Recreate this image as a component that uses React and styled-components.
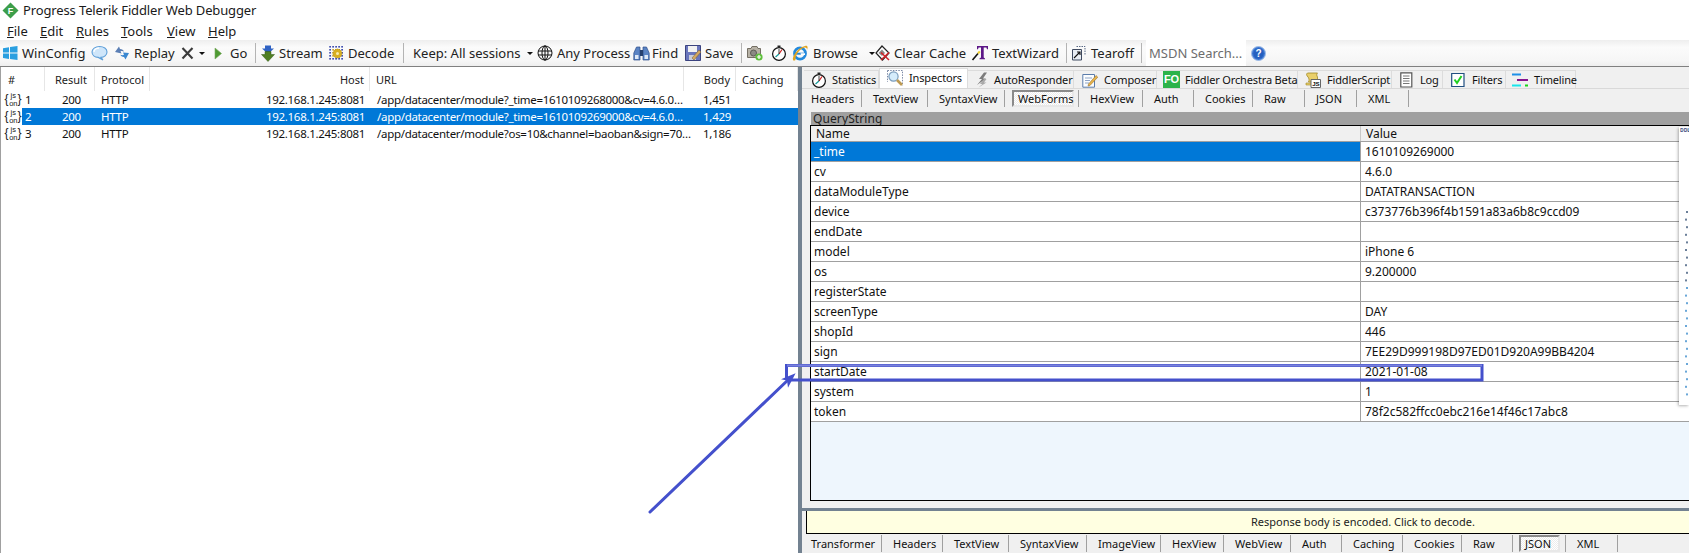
import React from "react";
import styled, { createGlobalStyle } from "styled-components";

const Global = createGlobalStyle`
  html, body { margin: 0; padding: 0; background: #fff; }
  body { font-family: "Noto Sans", "Open Sans", sans-serif; color: #111; }
`;

const Page = styled.div`
  position: relative; width: 1689px; height: 553px; overflow: hidden;
  display: flex; flex-direction: column; background: #fff;
`;
const TitleBar = styled.div`
  height: 20px; display: flex; align-items: center; gap: 4px; padding-left: 2px; font-size: 13px; color: #1a1a1a;
`;
const TitleText = styled.span`letter-spacing: -0.13px;`;
const MenuBar = styled.div`height: 19px; padding-top: 1px; display: flex; align-items: center; padding-left: 7px; font-size: 13px;`;
const MenuItem = styled.span`
  width: ${p => p.$w}px; flex-shrink: 0; color: #1a1a1a;
  &::first-letter { text-decoration: underline; }
`;
const Toolbar = styled.div`
  height: 26px; display: flex; align-items: center; padding-left: 2px; font-size: 13px; color: #222;
  background: linear-gradient(#eeeeee, #fbfbfb 28%, #f6f6f6 80%, #eeeeee);
`;
const Tool = styled.div`
  width: ${p => p.$w}px; padding-left: ${p => p.$pl || 0}px; box-sizing: border-box; flex-shrink: 0;
  display: flex; align-items: center; gap: ${p => p.$gap ?? 4}px; white-space: nowrap;
`;
const Caret = styled.span`
  width: 0; height: 0; border-left: 3px solid transparent; border-right: 3px solid transparent;
  border-top: 3px solid #111; margin-left: ${p => p.$ml || 0}px; flex-shrink: 0;
`;
const ToolSep = styled.div`
  width: ${p => p.$w}px; flex-shrink: 0; display: flex; justify-content: center;
  &::before { content: ""; width: 1px; height: 20px; background: #b4b4b4; }
`;
const Search = styled.div`
  width: 100px; height: 26px; background: #fff; color: #6d6d6d; font-size: 13px; flex-shrink: 0;
  display: flex; align-items: center; padding-left: 3px; box-sizing: border-box; margin-right: 5px; white-space: nowrap;
`;
const Main = styled.div`flex: 1; min-height: 0; display: flex; border-top: 1px solid #808080;`;
const Sessions = styled.div`width: 797px; flex-shrink: 0; border-left: 1px solid #a0a0a0; background: #fff; font-size: 11.5px; letter-spacing: -0.3px;`;
const grid = "44px 50px 55px 220px 314px 52px 62px";
const HeadRow = styled.div`
  display: grid; grid-template-columns: ${grid}; height: 24px; color: #222;
`;
const HeadCell = styled.div`
  display: flex; align-items: center; justify-content: ${p => p.$right ? "flex-end" : "flex-start"};
  padding: 0 ${p => p.$right ? 5 : 0}px 0 ${p => p.$pl ?? 6}px; border-right: 1px solid #e6e6e6; font-size: 11px; letter-spacing: 0;
`;
const Row = styled.div`
  display: grid; grid-template-columns: ${grid}; height: 17px; line-height: 17px; white-space: nowrap;
  color: ${p => p.$sel ? "#fff" : "#111"};
`;
const Cell = styled.div`
  background: ${p => p.$sel ? "#0078d7" : "transparent"};
  text-align: ${p => p.$align || "left"}; padding: 0 ${p => p.$pr ?? 0}px 0 ${p => p.$pl ?? 0}px;
`;
const NumCell = styled.div`display: flex; align-items: center; padding-left: 4px;`;
const Num = styled.span`
  flex: 1; align-self: stretch; padding-left: 3px; margin-left: 1px;
  background: ${p => p.$sel ? "#0078d7" : "transparent"};
`;
const Splitter = styled.div`width: 4px; flex-shrink: 0; background: #738291;`;
const Right = styled.div`
  flex: 1; min-width: 0; display: flex; flex-direction: column; background: #f0f0f0; font-size: 11px;
`;
const TabStrip = styled.div`
  height: 20px; margin-top: 1px; display: flex; align-items: flex-end; padding-left: 2px;
  border-bottom: 1px solid #d9d9d9;
`;
const Tab = styled.div`
  width: ${p => p.$w}px; box-sizing: border-box; flex-shrink: 0; display: flex; align-items: center;
  height: ${p => p.$on ? 20 : 18}px; gap: ${p => p.$gap}px; padding-left: ${p => p.$pl}px; white-space: nowrap;
  background: ${p => p.$on ? "#fff" : "#f0f0f0"}; border: 1px solid #dcdcdc; border-bottom: 0; border-left-width: ${p => p.$on ? 1 : 0}px;
  color: #111; font-size: 11px; letter-spacing: -0.15px; padding-bottom: ${p => p.$on ? 2 : 0}px;
`;
const SubTabs = styled.div`
  height: 19px; display: flex; padding-left: ${p => p.$pl || 0}px; flex-shrink: 0; align-items: stretch;
`;
const SubTab = styled.div`
  width: ${p => p.$w}px; box-sizing: border-box; flex-shrink: 0; display: flex; align-items: center;
  padding-left: ${p => p.$pl}px; white-space: nowrap; color: #111; font-size: 11px;
  border-right: 1px solid #a0a0a0; margin: 1px 0;
`;
const SubTabBox = styled.span`
  height: 17px; box-sizing: border-box; display: flex; align-items: center; padding: 0 4px; margin-left: -5px;
  width: ${p => p.$w}px; border: 2px solid; border-color: #8a8a8a #e8e8e8 #e8e8e8 #8a8a8a;
  background: repeating-conic-gradient(#ffffff 0 25%, #ececec 0 50%) 0 0 / 2px 2px;
`;
const Inspector = styled.div`flex: 1; min-height: 0; margin: 4px 0 0 8px; display: flex; flex-direction: column;`;
const Band = styled.div`
  height: 13px; line-height: 13px; background: #a0a0a0; padding-left: 2px; margin-left: 1px; color: #222; font-size: 12px; letter-spacing: 0.1px;
`;
const GridBox = styled.div`
  flex: 1; min-height: 0; border: 1px solid #000; border-right: 0; background: #eef6fd;
  display: flex; flex-direction: column;
`;
const GridHead = styled.div`
  height: 16px; flex-shrink: 0; display: grid; grid-template-columns: 550px 1fr; background: #f0f0f0; box-sizing: border-box;
  border-bottom: 1px solid #a0a0a0; line-height: 15px; font-size: 12px;
`;
const GridHeadCell = styled.div`padding-left: 5px; border-right: 1px solid #c8c8c8;`;
const GridRow = styled.div`
  height: 20px; flex-shrink: 0; box-sizing: border-box; display: grid; grid-template-columns: 550px 1fr;
  border-bottom: 1px solid #a0a0a0; background: #fff; line-height: 19px; font-size: 12px;
`;
const NameCell = styled.div`
  padding-left: 3px; border-right: 1px solid #a0a0a0; color: ${p => p.$sel ? "#fff" : "#111"};
  background: ${p => p.$sel ? "#0078d7" : "#fff"};
`;
const ValueCell = styled.div`padding-left: 4px;`;
const Gap = styled.div`height: 7px; flex-shrink: 0;`;
const HSplit = styled.div`height: 3px; flex-shrink: 0; background: #738291;`;
const Notice = styled.div`
  height: 23px; flex-shrink: 0; box-sizing: border-box; margin-left: 4px; background: #ffffe1;
  border: 1px solid #000; border-right: 0; border-top: 0; padding-left: 444px; line-height: 22px; font-size: 11px; color: #222;
`;
const Overlay = styled.div`
  position: absolute; left: 1679px; top: 127px; width: 10px; height: 278px; background: #fff;
  box-shadow: -1px 1px 3px rgba(0,0,0,.3);
  font-size: 5px; line-height: 7px; font-weight: 700; color: #3d4f80; overflow: hidden; padding-left: 1px; box-sizing: border-box;
`;
const OverlayMarks = styled.svg`position: absolute; left: 0; top: 83px;`;
const Annotation = styled.svg`position: absolute; left: 0; top: 0; pointer-events: none;`;

const S = ({ children, w = 16, h = 16, vb }) => (
  <svg width={w} height={h} viewBox={vb || `0 0 ${w} ${h}`} style={{ flexShrink: 0, display: "block", overflow: "visible" }}>{children}</svg>
);

const IconFiddler = () => (
  <S w={17} h={17}>
    <path d="M8.5 0.5 L16.5 8.5 L8.5 16.5 L0.5 8.5Z" fill="#3c9e4a" />
    <text x="8.5" y="12" textAnchor="middle" fontSize="9" fontWeight="700" fill="#fff" fontFamily="Liberation Sans">F</text>
  </S>
);
const IconWin = () => (
  <S>
    <path d="M1 3.2 L7 2.2V7.6H1ZM8 2L15.5 1V7.6H8ZM1 8.6H7V14L1 13ZM8 8.6H15.5V15L8 14Z" fill="#2a9fe0" />
  </S>
);
const IconChat = () => (
  <S w={17}>
    <path d="M8.5 1.5C12.8 1.5 16 3.8 16 7S13 12.3 10 12.4L12 15 7.3 12.4C3.6 12.2 1 10 1 7S4.2 1.5 8.5 1.5Z" fill="#cfe6fa" stroke="#5e9fd8" strokeWidth="1.1" />
    <path d="M3 7C3 4.5 5.5 3.2 8 3" stroke="#fff" strokeWidth="1.3" fill="none" />
  </S>
);
const IconReplay = () => (
  <S>
    <path d="M1 7 L5 1.5 L6 4 C8 4 9.5 5 10 6.5 C8.5 5.8 7.5 5.8 6.5 6.2 L7.5 8.5Z" fill="#5b7fb5" />
    <path d="M15 8 L11.5 14.5 L10 12 C8 12 6.8 11 6.3 9.8 C8 10.3 9 10.2 10 9.8 L9 7.5Z" fill="#3a87d0" />
  </S>
);
const IconX = () => (
  <S w={13} h={14}>
    <path d="M1.5 2 L11.5 12.5M11.5 2 L1.5 12.5" stroke="#3b3b3b" strokeWidth="2.1" />
  </S>
);
const IconGo = () => (
  <S w={8} h={13}>
    <path d="M1 1 L7.5 6.5 L1 12Z" fill="#4e9a32" stroke="#7aa860" strokeWidth=".6" />
  </S>
);
const IconStream = () => (
  <S w={14} h={17}>
    <path d="M4 0.5H10V3.5H13L7 9 1 3.5H4Z" fill="#2f62c4" />
    <path d="M4 6.5H10V9.5H13.5L7 16.5 0.5 9.5H4Z" fill="#4f7f22" stroke="#33591a" strokeWidth=".5" />
  </S>
);
const IconDecode = () => (
  <S>
    {[1, 4, 7, 10, 13].flatMap(x => [1, 4, 7, 10, 13].map(y => (
      <rect key={x + "-" + y} x={x - 0.7} y={y} width="1.6" height="1.6" fill={(x === 1 || x === 13 || y === 1 || y === 13) ? "#2f3fa8" : "#c9a227"} />
    )))}
    <circle cx="8.5" cy="8.5" r="4.5" fill="#d9b021" stroke="#9a7a12" strokeWidth=".6" strokeDasharray="1.2 .8" />
    <circle cx="8.5" cy="8.5" r="1.5" fill="#f7ecb0" />
  </S>
);
const IconGlobe = () => (
  <S>
    <g fill="none" stroke="#111" strokeWidth="1">
      <circle cx="8" cy="8" r="7" />
      <ellipse cx="8" cy="8" rx="3" ry="7" />
      <path d="M1 6H15M1 10H15M8 0.5V15.5" />
    </g>
  </S>
);
const IconFind = () => (
  <S w={17}>
    <path d="M3.5 2H7V15H0.8V8ZM13.5 2H10V15H16.2V8Z" fill="#5b84c4" stroke="#2f4f8a" strokeWidth=".7" />
    <path d="M7 5H10V11H7Z" fill="#26406f" />
    <path d="M2 10H5.5V14H2ZM11.5 10H15V14H11.5Z" fill="#dfe9f7" />
  </S>
);
const IconSave = () => (
  <S>
    <path d="M0.5 0.5H15.5V15.5H0.5Z" fill="#6a76bd" stroke="#3b437f" />
    <path d="M3 1H12V7H3Z" fill="#f2f2f2" />
    <path d="M4 10H11V15H4Z" fill="#c9ccd9" />
    <path d="M7 13 L14 5 L16 7 L9 15Z" fill="#d4a760" stroke="#6e5a34" strokeWidth=".5" />
  </S>
);
const IconCamera = () => (
  <S>
    <path d="M0.5 3.5H4L5 1.5H10L11 3.5H13.5V12.5H0.5Z" fill="#b7b2a6" stroke="#757065" />
    <circle cx="6.5" cy="8" r="3" fill="#8b8a84" stroke="#5c5b55" />
    <circle cx="12" cy="12" r="3.6" fill="#5fc03d" />
    <path d="M12 10V14M10 12H14" stroke="#fff" strokeWidth="1.2" />
  </S>
);
const IconTimer = () => (
  <S>
    <path d="M6.5 .5H9.5V2H6.5Z" fill="#222" />
    <circle cx="8" cy="9" r="6.4" fill="#fff" stroke="#111" strokeWidth="1.2" />
    <path d="M8 9L11 4.5" stroke="#d02020" strokeWidth="1.2" />
    <path d="M8 9L4.5 12" stroke="#159a9a" strokeWidth="1.2" />
    <path d="M8 9V4" stroke="#111" strokeWidth=".8" />
  </S>
);
const IconIE = () => (
  <S>
    <circle cx="8" cy="8.5" r="5.6" fill="none" stroke="#2389dc" strokeWidth="2.6" />
    <path d="M3 8.7H13" stroke="#2389dc" strokeWidth="2" />
    <path d="M8.5 8.2H13V10H9Z" fill="#fff" />
    <path d="M1 15 C0 12 5 3 13 1 C16 0 16 3 15 5 C15 3 14 2.3 12.5 2.6 C7 4 3 11 3.5 15 C2.7 15.6 1.4 15.8 1 15Z" fill="#e2a41f" />
  </S>
);
const IconClear = () => (
  <S w={15}>
    <path d="M7 1 L14 8 L7.5 15 L1 8Z" fill="#fff" stroke="#222" strokeWidth="1.2" />
    <path d="M3.5 8 L7 4.5 L10 8 L7 11Z" fill="#8a8a8a" />
    <path d="M6 7.5 L14 15M14 7.5 L6 15" stroke="#d1242a" strokeWidth="1.6" />
  </S>
);
const IconWizard = () => (
  <S>
    <path d="M5 1H16V4.2H15L14.4 2.6H11.7V12.5L13 13.4V14.2H7.5V13.4L9 12.5V2.6H6.6L6 4.2H5Z" fill="#5c1787" />
    <path d="M0.5 15 L6 8.5" stroke="#111" strokeWidth="1.6" />
    <path d="M6 8.5 L7.8 6.4" stroke="#f0cf2a" strokeWidth="2" />
  </S>
);
const IconTearoff = () => (
  <S w={14}>
    <path d="M4.5 1.5H13V9.5" fill="none" stroke="#5a6a86" strokeDasharray="1.5 1" />
    <path d="M.5 4.5H9.5V15H.5Z" fill="#e8edf4" stroke="#3f4a60" />
    <path d="M2 13 L8 7M5 7H8V10" stroke="#111" strokeWidth="1.1" fill="none" />
  </S>
);
const IconHelp = () => (
  <S w={15} h={15}>
    <circle cx="7.5" cy="7.5" r="7" fill="#3e78d2" stroke="#9fbde8" />
    <circle cx="7.5" cy="7.5" r="5.2" fill="#2560c0" />
    <text x="7.5" y="11.2" textAnchor="middle" fontSize="10" fontWeight="700" fill="#fff" fontFamily="Liberation Sans">?</text>
  </S>
);
const IconInspect = () => (
  <S>
    <path d="M.5 .5H15.5V15.5" fill="none" stroke="#7c8aa6" strokeDasharray="1.5 1.2" />
    <path d="M.5 .5V12" fill="none" stroke="#7c8aa6" strokeDasharray="1.5 1.2" />
    <circle cx="6.5" cy="6.5" r="4.6" fill="#d5ecfb" stroke="#7a9cbc" strokeWidth="1.2" />
    <path d="M10 10 L15 15" stroke="#bd9a52" strokeWidth="2.6" />
  </S>
);
const IconBolt = () => (
  <S w={14}>
    <path d="M9 .5 L4 7H7L2 13 L11 6.5H8L12 .5Z" fill="#7c7c7c" />
    <path d="M9 7 L5 12H7.5L3.5 15.5 L11.5 10.5H9L11.5 7Z" fill="#a9a9a9" />
  </S>
);
const IconComposer = () => (
  <S>
    <path d="M.8 2.5H12.5V15.2H.8Z" fill="#fbfdff" stroke="#5a7cab" />
    <path d="M3 6H10M3 8.5H8M3 11H7" stroke="#8fa5c6" />
    <path d="M6.5 12 L14 3.5 L15.8 5.2 L8 13.5 L6 14Z" fill="#e7b34a" stroke="#8a6524" strokeWidth=".5" />
  </S>
);
const FO = styled.span`
  width: 17px; height: 17px; background: #2cb34a; color: #fff; font-weight: 700; font-size: 11px; line-height: 17px;
  text-align: center; flex-shrink: 0; font-family: "Liberation Sans", sans-serif;
`;
const IconScript = () => (
  <S>
    <path d="M2.5 1H12.5C11.5 2 11.5 3.5 12.5 5V10H3.5C4.5 8 4 6 3 5 C1.5 3.5 1 2 2.5 1Z" fill="#e9cf6b" stroke="#a08826" strokeWidth=".8" />
    <path d="M1 11H9V13H1Z" fill="#e9cf6b" stroke="#a08826" strokeWidth=".6" />
    <path d="M6 7.5H15.5V15.5H6Z" fill="#fff" stroke="#666" />
    <text x="10.8" y="14" textAnchor="middle" fontSize="6.2" fontWeight="700" fill="#111" fontFamily="Liberation Sans">JS</text>
  </S>
);
const IconLog = () => (
  <S w={13}>
    <path d="M.8 .8H11.8V15H.8Z" fill="#fff" stroke="#555" strokeWidth="1.2" />
    <path d="M3 4H9.5M3 6.5H9.5M3 9H9.5M3 11.5H9.5" stroke="#777" />
  </S>
);
const IconFilter = () => (
  <S w={14}>
    <path d="M.7 1.5H13V14.5H.7Z" fill="#fff" stroke="#214f80" strokeWidth="1.2" />
    <path d="M3.5 7.5 L6 11 L10.5 4" fill="none" stroke="#22d022" strokeWidth="2" />
  </S>
);
const IconTimeline = () => (
  <S>
    <path d="M0 2.5H9" stroke="#1e90e8" strokeWidth="2" />
    <path d="M5 8H16" stroke="#86148f" strokeWidth="2" />
    <path d="M0 13.5H9" stroke="#19e6ec" strokeWidth="2" />
    <path d="M13 13.5H16" stroke="#19d619" strokeWidth="2" />
  </S>
);
const IconJson = () => (
  <S w={16} h={17}>
    <g fill="#222" fontFamily="Liberation Sans" letterSpacing="0">
      <text x="-0.5" y="12" fontSize="12">{"{"}</text>
      <text x="12.5" y="12" fontSize="12">{"}"}</text>
      <text x="5.5" y="6.5" fontSize="7.5">js</text>
      <text x="4.2" y="14.5" fontSize="7.5">on</text>
    </g>
  </S>
);

const menus = [["File", 33], ["Edit", 36], ["Rules", 45], ["Tools", 46], ["View", 41], ["Help", 30]];
const sessions = [
  ["1", "1,451", "/app/datacenter/module?_time=1610109268000&cv=4.6.0…"],
  ["2", "1,429", "/app/datacenter/module?_time=1610109269000&cv=4.6.0…"],
  ["3", "1,186", "/app/datacenter/module?os=10&channel=baoban&sign=70…"],
];
const tabs = [
  { t: "Statistics", w: 75, pl: 7, gap: 5, i: <IconTimer /> },
  { t: "Inspectors", w: 89, pl: 7, gap: 6, i: <IconInspect />, on: true },
  { t: "AutoResponder", w: 106, pl: 7, gap: 5, i: <IconBolt /> },
  { t: "Composer", w: 83, pl: 8, gap: 6, i: <IconComposer /> },
  { t: "Fiddler Orchestra Beta", w: 141, pl: 6, gap: 5, i: <FO>FO</FO> },
  { t: "FiddlerScript", w: 94, pl: 7, gap: 6, i: <IconScript /> },
  { t: "Log", w: 51, pl: 8, gap: 7, i: <IconLog /> },
  { t: "Filters", w: 63, pl: 8, gap: 7, i: <IconFilter /> },
  { t: "Timeline", w: 70, pl: 6, gap: 6, i: <IconTimeline /> },
];
const sub = [["Headers", 60, 9], ["TextView", 66, 11], ["SyntaxView", 77, 11], ["WebForms", 74, 12, 1, 62], ["HexView", 64, 11], ["Auth", 51, 11], ["Cookies", 59, 11], ["Raw", 52, 11], ["JSON", 52, 11], ["XML", 52, 11]];
const bottom = [["Transformer", 76, 5], ["Headers", 61, 11], ["TextView", 66, 11], ["SyntaxView", 78, 11], ["ImageView", 74, 11], ["HexView", 63, 11], ["WebView", 67, 11], ["Auth", 51, 11], ["Caching", 61, 11], ["Cookies", 59, 11], ["Raw", 51, 11], ["JSON", 53, 11, 1, 41], ["XML", 52, 11]];
const params = [
  ["_time", "1610109269000"], ["cv", "4.6.0"], ["dataModuleType", "DATATRANSACTION"],
  ["device", "c373776b396f4b1591a83a6b8c9ccd09"], ["endDate", ""], ["model", "iPhone 6"],
  ["os", "9.200000"], ["registerState", ""], ["screenType", "DAY"], ["shopId", "446"],
  ["sign", "7EE29D999198D97ED01D920A99BB4204"], ["startDate", "2021-01-08"], ["system", "1"],
  ["token", "78f2c582ffcc0ebc216e14f46c17abc8"],
];
const marks = Array.from({ length: 25 }, (_, i) => i);

const Tabs = ({ items, pl }) => (
  <SubTabs $pl={pl}>
    {items.map(([label, w, p, active, bw]) => (
      <SubTab key={label} $w={w} $pl={p}>
        {active ? <SubTabBox $w={bw}>{label}</SubTabBox> : label}
      </SubTab>
    ))}
  </SubTabs>
);

export default function App() {
  return (
    <Page>
      <Global />
      <TitleBar><IconFiddler /><TitleText>Progress Telerik Fiddler Web Debugger</TitleText></TitleBar>
      <MenuBar>{menus.map(([m, w]) => <MenuItem key={m} $w={w}>{m}</MenuItem>)}</MenuBar>
      <Toolbar>
        <Tool $w={89}><IconWin />WinConfig</Tool>
        <Tool $w={23}><IconChat /></Tool>
        <Tool $w={67}><IconReplay />Replay</Tool>
        <Tool $w={33}><IconX /><Caret $ml={1} /></Tool>
        <Tool $w={36} $gap={8}><IconGo />Go</Tool>
        <ToolSep $w={11} />
        <Tool $w={68}><IconStream />Stream</Tool>
        <Tool $w={69} $gap={3}><IconDecode />Decode</Tool>
        <ToolSep $w={10} />
        <Tool $w={129} $pl={5}>Keep: All sessions<Caret $ml={3} /></Tool>
        <Tool $w={96}><IconGlobe />Any Process</Tool>
        <Tool $w={52} $gap={2}><IconFind />Find</Tool>
        <Tool $w={51}><IconSave />Save</Tool>
        <ToolSep $w={11} />
        <Tool $w={24}><IconCamera /></Tool>
        <Tool $w={21}><IconTimer /></Tool>
        <Tool $w={83} $gap={5}><IconIE />Browse<Caret $ml={6} /></Tool>
        <Tool $w={97}><IconClear />Clear Cache</Tool>
        <Tool $w={89}><IconWizard />TextWizard</Tool>
        <ToolSep $w={11} />
        <Tool $w={65} $gap={5}><IconTearoff />Tearoff</Tool>
        <ToolSep $w={9} />
        <Search>MSDN Search...</Search>
        <IconHelp />
      </Toolbar>
      <Main>
        <Sessions>
          <HeadRow>
            <HeadCell $pl={7}>#</HeadCell>
            <HeadCell $pl={10}>Result</HeadCell>
            <HeadCell>Protocol</HeadCell>
            <HeadCell $right>Host</HeadCell>
            <HeadCell>URL</HeadCell>
            <HeadCell $right>Body</HeadCell>
            <HeadCell>Caching</HeadCell>
          </HeadRow>
          {sessions.map(([n, body, url], i) => {
            const sel = i === 1;
            return (
              <Row key={n} $sel={sel}>
                <NumCell><IconJson /><Num $sel={sel}>{n}</Num></NumCell>
                <Cell $sel={sel} $pl={17}>200</Cell>
                <Cell $sel={sel} $pl={6}>HTTP</Cell>
                <Cell $sel={sel} $align="right" $pr={5}>192.168.1.245:8081</Cell>
                <Cell $sel={sel} $pl={7}>{url}</Cell>
                <Cell $sel={sel} $align="right" $pr={5}>{body}</Cell>
                <Cell $sel={sel} />
              </Row>
            );
          })}
        </Sessions>
        <Splitter />
        <Right>
          <TabStrip>
            {tabs.map(t => (
              <Tab key={t.t} $w={t.w} $pl={t.pl} $gap={t.gap} $on={t.on}>{t.i}{t.t}</Tab>
            ))}
          </TabStrip>
          <Tabs items={sub} pl={0} />
          <Inspector>
            <Band>QueryString</Band>
            <GridBox>
              <GridHead>
                <GridHeadCell>Name</GridHeadCell>
                <GridHeadCell>Value</GridHeadCell>
              </GridHead>
              {params.map(([k, v], i) => (
                <GridRow key={k}>
                  <NameCell $sel={i === 0}>{k}</NameCell>
                  <ValueCell>{v}</ValueCell>
                </GridRow>
              ))}
            </GridBox>
          </Inspector>
          <Gap />
          <HSplit />
          <Notice>Response body is encoded. Click to decode.</Notice>
          <Tabs items={bottom} pl={4} />
        </Right>
      </Main>
      <Overlay>
        DDL
        <OverlayMarks width="10" height="195">
          {marks.map(i => (
            <rect key={i} x={i % 2 ? 6 : 7} y={i * 7.6 + 1} width="2" height="2" fill={i > 9 ? "#6aa7d8" : "#6b7f99"} />
          ))}
        </OverlayMarks>
      </Overlay>
      <Annotation width="1689" height="553">
        <path d="M786.5 380 V365.5 H1482 V380 H786.5" fill="none" stroke="#4450cc" strokeWidth="3" />
        <path d="M787 365.5 H1482" stroke="#7a82dc" strokeWidth="2" />
        <path d="M650 512 L789 379" stroke="#4450cc" strokeWidth="3" strokeLinecap="round" />
        <path d="M795.6 373.3 L781 379.3 L787 380.5 L788 387.7Z" fill="#4450cc" />
      </Annotation>
    </Page>
  );
}
